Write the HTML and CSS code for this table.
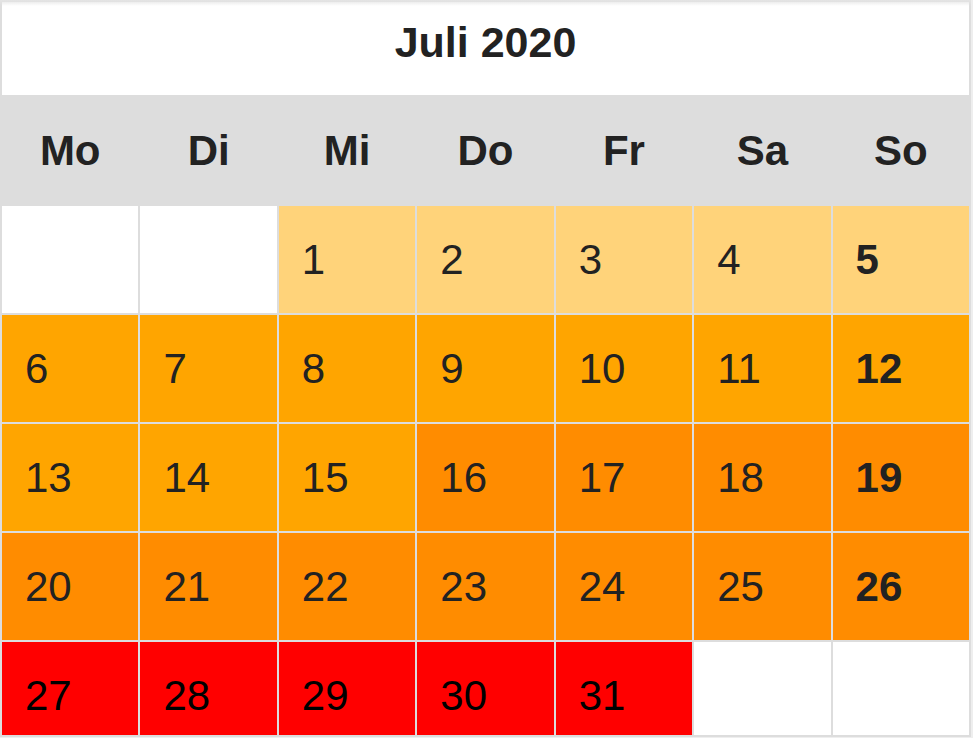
FILE: index.html
```html
<!DOCTYPE html>
<html lang="de">
<head>
<meta charset="utf-8">
<title>Juli 2020</title>
<link rel="stylesheet" href="styles.css">
</head>
<body>
<div class="calendar">
  <div class="title">Juli 2020</div>
  <div class="dow">Mo</div>
  <div class="dow">Di</div>
  <div class="dow">Mi</div>
  <div class="dow">Do</div>
  <div class="dow">Fr</div>
  <div class="dow">Sa</div>
  <div class="dow">So</div>

  <div class="day empty"></div>
  <div class="day empty"></div>
  <div class="day l1">1</div>
  <div class="day l1">2</div>
  <div class="day l1">3</div>
  <div class="day l1">4</div>
  <div class="day l1 sun">5</div>

  <div class="day l2">6</div>
  <div class="day l2">7</div>
  <div class="day l2">8</div>
  <div class="day l2">9</div>
  <div class="day l2">10</div>
  <div class="day l2">11</div>
  <div class="day l2 sun">12</div>

  <div class="day l2">13</div>
  <div class="day l2">14</div>
  <div class="day l2">15</div>
  <div class="day l3">16</div>
  <div class="day l3">17</div>
  <div class="day l3">18</div>
  <div class="day l3 sun">19</div>

  <div class="day l3">20</div>
  <div class="day l3">21</div>
  <div class="day l3">22</div>
  <div class="day l3">23</div>
  <div class="day l3">24</div>
  <div class="day l3">25</div>
  <div class="day l3 sun">26</div>

  <div class="day l4">27</div>
  <div class="day l4">28</div>
  <div class="day l4">29</div>
  <div class="day l4">30</div>
  <div class="day l4">31</div>
  <div class="day empty"></div>
  <div class="day empty"></div>
</div>
</body>
</html>
```
FILE: styles.css
```css
html, body {
  margin: 0;
  padding: 0;
}
body {
  background: #eeeeee;
  font-family: "Liberation Sans", Arial, sans-serif;
  color: #222222;
}
.calendar {
  width: 971px;
  box-sizing: border-box;
  display: grid;
  grid-template-columns: repeat(7, 1fr);
  grid-template-rows: 93px 107px 107px 107px 107px 107px 93px;
  gap: 2px;
  padding: 2px;
  background: #dddddd;
  position: relative;
}
.title {
  grid-column: 1 / -1;
  background: #ffffff;
  text-align: center;
  font-weight: bold;
  font-size: 43px;
  line-height: 48px;
  padding-top: 16px;
  box-sizing: border-box;
}
.calendar::before {
  content: "";
  position: absolute;
  left: 0;
  right: 0;
  top: 0;
  height: 6px;
  background: linear-gradient(#e4e4e4, rgba(255, 255, 255, 0));
}
.dow {
  background: #dddddd;
  display: flex;
  align-items: center;
  justify-content: center;
  font-weight: bold;
  font-size: 42px;
  line-height: 48px;
}
.day {
  font-size: 42px;
  line-height: 48px;
  padding: 30px 0 0 23px;
  box-sizing: border-box;
  overflow: hidden;
}
.empty { background: #ffffff; }
.l1 { background: #ffd37a; }
.l2 { background: #ffa500; }
.l3 { background: #ff8c00; }
.l4 { background: #ff0000; color: #000000; }
.sun { font-weight: bold; }
```
